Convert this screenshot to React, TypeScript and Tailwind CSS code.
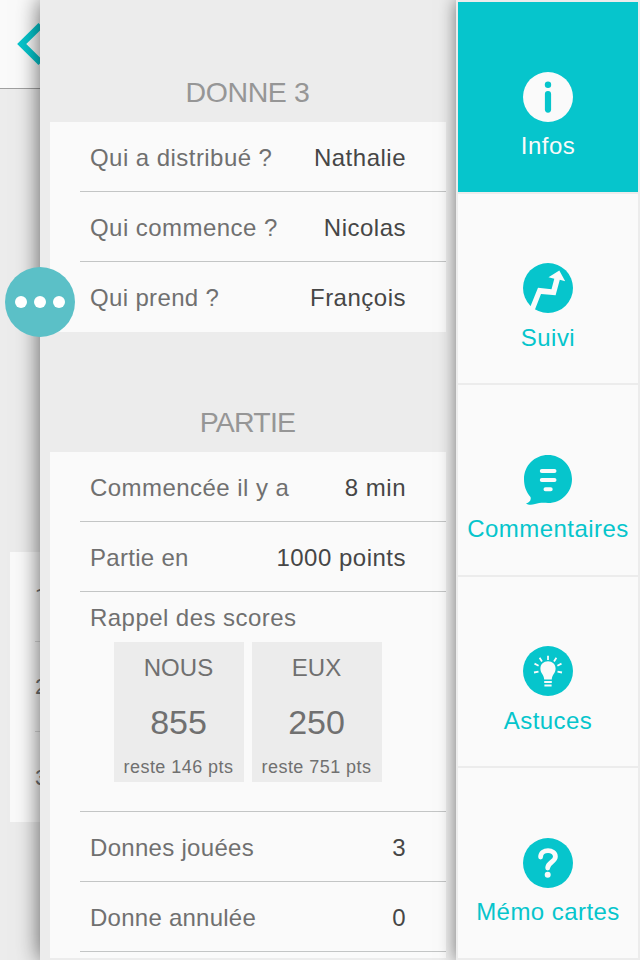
import { ReactNode } from 'react';
import clsx from 'clsx';

interface IRowProps {
  label: string;
  value: string;
  spacing?: string;
  last?: boolean;
}

function Row({ label, value, spacing = 'tracking-[0.45px]', last }: IRowProps) {
  return (
    <div
      className={clsx(
        'ml-[30px] flex h-[70px] items-center justify-between pr-[40px] pl-[10px] pt-[2px]',
        !last && 'border-b border-[#c3c5c5]'
      )}
    >
      <span className={clsx('text-[#707070]', spacing)}>{label}</span>
      <span className="text-[#464646] tracking-[0.5px]">{value}</span>
    </div>
  );
}

interface IScoreCardProps {
  team: string;
  score: number;
  left: number;
}

function ScoreCard({ team, score, left }: IScoreCardProps) {
  return (
    <div className="flex h-[140px] w-[130px] flex-col items-center bg-[#ececec]">
      <span className="mt-[12px] pr-[1px] leading-[28px] tracking-[0.1px]">{team}</span>
      <span className="mt-[20px] pr-[1px] text-[34px] leading-[40px] tracking-normal">{score}</span>
      <span className="mt-[14px] pr-[1px] text-[18px] leading-[22px] tracking-[0.45px]">reste {left} pts</span>
    </div>
  );
}

function SectionTitle({ children, spacing }: { children: ReactNode; spacing: string }) {
  return (
    <h2 className={clsx('flex h-[60px] items-center justify-center pr-[1px] text-[28.5px] text-[#969696]', spacing)}>
      {children}
    </h2>
  );
}

function InfoIcon() {
  return (
    <svg viewBox="0 0 50 50" className="size-[50px]">
      <circle cx="25" cy="25" r="25" fill="#fafafa" />
      <circle cx="25" cy="12.7" r="3.2" fill="#06c5cc" />
      <rect x="21.9" y="19" width="6.2" height="21.7" rx="3.1" fill="#06c5cc" />
    </svg>
  );
}

function TrendIcon() {
  return (
    <svg viewBox="0 0 50 50" className="size-[50px]">
      <circle cx="25" cy="25" r="25" fill="#06c5cc" />
      <path
        d="M6.8 45 L15 24.8 L28.5 26.3 L31.3 15.8 L25.5 14.2 L36.3 7.5 L42.2 18.2 L36.8 16.8 L32.6 32.3 L18 31 L11 49 Z"
        fill="#fafafa"
      />
    </svg>
  );
}

function CommentIcon() {
  return (
    <svg viewBox="0 0 50 50" className="size-[50px]">
      <path
        d="M25 0 C38.5 0 49 10.7 49 24 C49 37.5 38.5 48 25 48 C20 47.6 16 47.8 12 49 C8.5 50.3 5 50 3 48.5 C6.5 47.6 8.5 45 7.5 42 C3 36.8 1 31 1 24 C1 10.7 11.5 0 25 0 Z"
        fill="#06c5cc"
      />
      <path d="M18.8 16 H31.5 M18.8 25 H31.5 M22.5 34.2 H27.7" stroke="#fafafa" strokeWidth="4" strokeLinecap="round" />
    </svg>
  );
}

function BulbIcon() {
  return (
    <svg viewBox="0 0 50 50" className="size-[50px]">
      <circle cx="25" cy="25" r="25" fill="#06c5cc" />
      <path
        d="M21.2 33.6 C21.2 29 17.4 27.5 17.4 22.6 C17.4 18.2 20.8 15.3 25 15.3 C29.2 15.3 32.6 18.2 32.6 22.6 C32.6 27.5 28.8 29 28.8 33.6 Z"
        fill="#fafafa"
      />
      <path d="M21.2 36 H28.8 M21.4 39.4 H28.6" stroke="#fafafa" strokeWidth="2" />
      <path
        d="M25 9.7 V14 M16.6 11.8 L19 15.5 M33.4 11.8 L31 15.5 M11.5 17.6 L15.6 19.7 M38.5 17.6 L34.4 19.7 M11 26.5 L15.5 25.6 M39 26.5 L34.5 25.6"
        stroke="#fafafa"
        strokeWidth="1.8"
      />
    </svg>
  );
}

function HelpIcon() {
  return (
    <svg viewBox="0 0 50 50" className="size-[50px]">
      <circle cx="25" cy="25" r="25" fill="#06c5cc" />
      <path
        d="M17.6 19 C17.6 10.6 32.4 10.6 32.4 18.8 C32.4 23.8 24.7 24.3 24.7 30"
        fill="none"
        stroke="#fafafa"
        strokeWidth="4.8"
        strokeLinecap="round"
      />
      <circle cx="24.7" cy="36.8" r="3" fill="#fafafa" />
    </svg>
  );
}

const tabs = [
  { label: 'Infos', icon: <InfoIcon /> },
  { label: 'Suivi', icon: <TrendIcon /> },
  { label: 'Commentaires', icon: <CommentIcon /> },
  { label: 'Astuces', icon: <BulbIcon /> },
  { label: 'Mémo cartes', icon: <HelpIcon /> },
];

function Sidebar() {
  return (
    <nav className="relative z-10 grid w-[184px] shrink-0 grid-rows-5 gap-[2px] bg-[#ececec] p-[2px] shadow-[0_0_16px_rgba(0,0,0,0.5)]">
      {tabs.map((tab, i) => (
        <div
          key={tab.label}
          className={clsx(
            'flex flex-col items-center pt-[69.6px]',
            i === 0 ? 'bg-[#06c5cc] text-[#fafafa]' : 'bg-[#fafafa] text-[#06c5cc]'
          )}
        >
          {tab.icon}
          <span className="mt-[9.4px] leading-[30px] tracking-[0.45px] whitespace-nowrap">{tab.label}</span>
        </div>
      ))}
    </nav>
  );
}

function BackgroundPage() {
  return (
    <div className="h-full w-[40px] shrink-0 overflow-hidden bg-[#ececec]">
      <div className="h-[89px] border-b border-[#a0a0a0] bg-[#fafafa]">
        <svg viewBox="0 0 40 88" className="h-[88px] w-[40px]">
          <path d="M40.7 25.2 L21.7 44 L40.7 62.8" fill="none" stroke="#06c5cc" strokeWidth="6.4" />
        </svg>
      </div>
      <div className="mt-[463px] ml-[10px] h-[270px] w-[120px] bg-[#fafafa] pl-[25px] text-[22px] text-[#707070]">
        <div className="flex h-[90px] items-center border-b border-[#d8d8d8] font-[Roboto]">1</div>
        <div className="flex h-[90px] items-center border-b border-[#d8d8d8]">2</div>
        <div className="flex h-[90px] items-center">3</div>
      </div>
    </div>
  );
}

export default function App() {
  return (
    <div className="relative flex h-[960px] w-[640px] overflow-hidden bg-[#ececec] font-['Liberation_Sans',Arial,sans-serif] text-[24px] tracking-[0.45px]">
      <BackgroundPage />
      <main className="relative w-[416px] shrink-0 bg-[#ececec] px-[10px] pt-[62px] shadow-[0_0_22px_rgba(0,0,0,0.62)]">
        <SectionTitle spacing="tracking-[-0.4px]">DONNE 3</SectionTitle>
        <section className="bg-[#fafafa]">
          <Row label="Qui a distribué ?" value="Nathalie" />
          <Row label="Qui commence ?" value="Nicolas" />
          <Row label="Qui prend ?" value="François" spacing="tracking-[0.35px]" last />
        </section>
        <div className="h-[60px]" />
        <SectionTitle spacing="tracking-[-0.8px]">PARTIE</SectionTitle>
        <section className="h-[506px] bg-[#fafafa]">
          <Row label="Commencée il y a" value="8 min" />
          <Row label="Partie en" value="1000 points" spacing="tracking-[0.3px]" />
          <div className="ml-[30px] h-[220px] border-b border-[#c3c5c5] text-[#707070]">
            <div className="h-[50px] pt-[12px] pl-[10px] leading-[28px]">Rappel des scores</div>
            <div className="flex gap-2 pl-[34px]">
              <ScoreCard team="NOUS" score={855} left={146} />
              <ScoreCard team="EUX" score={250} left={751} />
            </div>
          </div>
          <Row label="Donnes jouées" value="3" spacing="tracking-[0.3px]" />
          <Row label="Donne annulée" value="0" spacing="tracking-[0.25px]" />
        </section>
      </main>
      <Sidebar />
      <button className="absolute top-[267px] left-[5px] z-20 flex size-[70px] items-center justify-center gap-[7px] rounded-full bg-[#5bc0c7]">
        <i className="size-[12px] rounded-full bg-white" />
        <i className="size-[12px] rounded-full bg-white" />
        <i className="size-[12px] rounded-full bg-white" />
      </button>
    </div>
  );
}
